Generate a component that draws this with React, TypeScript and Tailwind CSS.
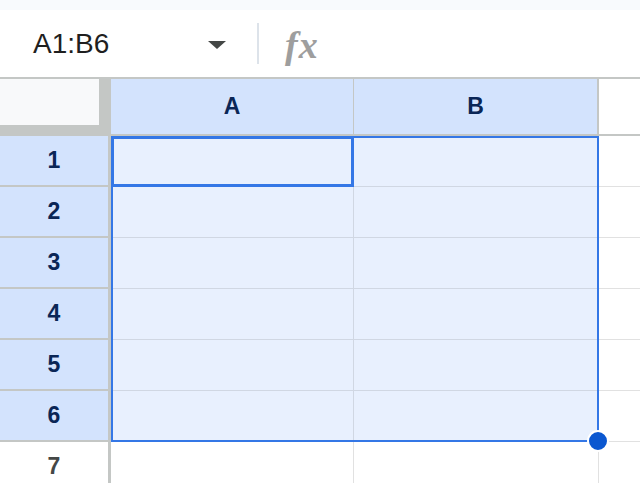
import React from 'react';

const rows = [1, 2, 3, 4, 5, 6, 7];

function RowHeader({ n, selected }: { n: number; selected: boolean }) {
  return (
    <div
      className={`w-[111px] shrink-0 flex items-center justify-center border-r-[3px] border-b-2 border-[#c4c7c5] text-[23px] font-bold ${
        selected ? 'bg-[#d3e3fd] text-[#0a2656]' : 'bg-white text-[#444746]'
      }`}
    >
      {n}
    </div>
  );
}

export default function App() {
  return (
    <div className="w-[640px] h-[483px] overflow-hidden bg-white font-['Liberation_Sans',Arial,sans-serif]">
      {/* top strip */}
      <div className="h-[10px] bg-[#f8fafd]" />

      {/* formula bar */}
      <div className="h-[67px] flex items-center bg-white">
        <div className="pl-[33px] w-[206px] text-[28px] leading-[28px] text-[#1f1f1f]">A1:B6</div>
        <svg width="18" height="8" viewBox="0 0 18 8" className="mt-[2px] ml-[2px]">
          <polygon points="0,0 18,0 9,8" fill="#444746" />
        </svg>
        <div className="ml-[31px] w-[2px] h-[41px] bg-[#dde3ea]" />
        <div className="ml-[26px] mt-[2px] text-[38px] leading-[38px] italic font-bold text-[#9e9e9e] font-['Liberation_Serif',serif] tracking-[1px]">
          fx
        </div>
      </div>

      {/* grid */}
      <div className="relative">
        <div className="h-[2px] bg-[#c4c7c5]" />

        {/* column headers */}
        <div className="flex h-[57px]">
          <div className="w-[111px] shrink-0 bg-[#c4c7c5]">
            <div className="w-[99px] h-[46px] bg-[#f8f9fa]" />
          </div>
          <div className="w-[243px] shrink-0 flex items-center justify-center bg-[#d3e3fd] border-r border-b-2 border-[#c4c7c5] text-[23px] font-bold text-[#0a2656]">
            A
          </div>
          <div className="w-[245px] shrink-0 flex items-center justify-center bg-[#d3e3fd] border-r-2 border-b-2 border-[#c4c7c5] text-[23px] font-bold text-[#0a2656]">
            B
          </div>
          <div className="flex-1 bg-white border-b-2 border-[#c4c7c5]" />
        </div>

        {/* body rows */}
        {rows.map((n) => {
          const selected = n <= 6;
          return (
            <div key={n} className="flex h-[51px]">
              <RowHeader n={n} selected={selected} />
              {n === 1 ? (
                <div className="w-[243px] shrink-0 bg-[#e8f0fe] border-[3px] border-[#3477e6]" />
              ) : (
                <div
                  className={`w-[243px] shrink-0 border-r border-b ${
                    selected ? 'bg-[#e8f0fe] border-[#d0d7e3]' : 'bg-white border-[#e1e1e1]'
                  }`}
                />
              )}
              <div
                className={`w-[245px] shrink-0 border-r border-b ${
                  selected ? 'bg-[#e8f0fe] border-[#d0d7e3]' : 'bg-white border-[#e1e1e1]'
                }`}
              />
              <div className="flex-1 bg-white border-b border-[#e1e1e1]" />
            </div>
          );
        })}

        {/* selection range outline */}
        <div className="absolute left-[111px] top-[59px] w-[488px] h-[306px] border-2 border-[#3477e6] pointer-events-none" />
        {/* fill handle */}
        <div className="absolute left-[587px] top-[353px] w-[22px] h-[22px] rounded-full bg-[#0b57d0] border-2 border-white" />
      </div>
    </div>
  );
}
